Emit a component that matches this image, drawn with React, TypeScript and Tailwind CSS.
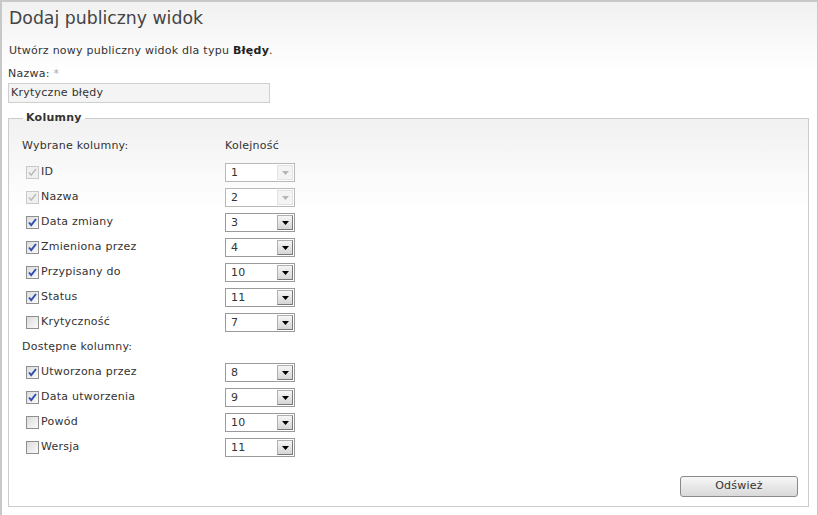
import React from 'react';

type Row = { label: string; value: string; checked: boolean; locked?: boolean };

const selected: Row[] = [
  { label: 'ID', value: '1', checked: true, locked: true },
  { label: 'Nazwa', value: '2', checked: true, locked: true },
  { label: 'Data zmiany', value: '3', checked: true },
  { label: 'Zmieniona przez', value: '4', checked: true },
  { label: 'Przypisany do', value: '10', checked: true },
  { label: 'Status', value: '11', checked: true },
  { label: 'Krytyczność', value: '7', checked: false },
];

const available: Row[] = [
  { label: 'Utworzona przez', value: '8', checked: true },
  { label: 'Data utworzenia', value: '9', checked: true },
  { label: 'Powód', value: '10', checked: false },
  { label: 'Wersja', value: '11', checked: false },
];

function Checkbox({ checked, locked }: { checked: boolean; locked?: boolean }) {
  return (
    <span
      className={
        'relative flex h-[13px] w-[13px] shrink-0 items-center justify-center border ' +
        (locked
          ? 'border-[#c9c9c9] bg-[#f0f0f0]'
          : 'border-[#8f8f8f] bg-gradient-to-br from-[#dcdcdc] to-[#fafafa]')
      }
    >
      {checked && (
        <svg width="9" height="9" viewBox="0 0 9 9">
          <path
            d="M1 4.5 L3.2 7.2 L8 1"
            fill="none"
            stroke={locked ? '#b8b8b8' : '#2f4fb0'}
            strokeWidth={locked ? 1.4 : 1.9}
          />
        </svg>
      )}
    </span>
  );
}

function OrderSelect({ value, locked }: { value: string; locked?: boolean }) {
  return (
    <div
      className={
        'flex h-[19px] w-[70px] items-center border bg-white ' +
        (locked ? 'border-[#b9b9b9]' : 'border-[#9a9a9a]')
      }
    >
      <span className="flex-1 pl-[5px] text-[11px] leading-none text-[#333]">{value}</span>
      <span
        className={
          'mr-[1px] flex h-[15px] w-[16px] items-center justify-center border ' +
          (locked
            ? 'border-[#e2e2e2] bg-[#f4f4f4]'
            : 'border-[#b0b0b0] border-r-[#7a7a7a] border-b-[#7a7a7a] bg-gradient-to-b from-[#f6f6f6] to-[#d6d6d6]')
        }
      >
        <svg width="7" height="4" viewBox="0 0 7 4">
          <path d="M0 0 H7 L3.5 4 Z" fill={locked ? '#b5b5b5' : '#000'} />
        </svg>
      </span>
    </div>
  );
}

function ColumnRow({ row }: { row: Row }) {
  return (
    <div className="flex h-[25px] items-center">
      <div className="flex w-[203px] items-center pl-[4px]">
        <Checkbox checked={row.checked} locked={row.locked} />
        <span className="ml-[2px] text-[#333]">{row.label}</span>
      </div>
      <OrderSelect value={row.value} locked={row.locked} />
    </div>
  );
}

export default function App() {
  return (
    <div
      className="h-[515px] w-[818px] overflow-hidden bg-white text-[11px] tracking-[0.25px] text-[#333]"
      style={{ fontFamily: '"DejaVu Sans", Verdana, sans-serif' }}
    >
      <div className="h-[560px] border-l-2 border-r border-t-2 border-[#c8c8c8] bg-gradient-to-b from-[#f1f1f1] to-white to-[70px] px-[6px] pt-[5px]">
        <h1 className="ml-[1px] text-[17.3px] leading-[22px] tracking-normal text-[#444]">Dodaj publiczny widok</h1>

        <p className="mt-[15px] ml-[1px] leading-[14px]">
          Utwórz nowy publiczny widok dla typu <b className="text-[#222]">Błędy</b>.
        </p>

        <div className="mt-[9px] leading-[14px]">
          Nazwa: <span className="text-[#aaa]">*</span>
        </div>
        <div className="mt-[2px] flex h-[20px] w-[262px] items-center border border-[#cfcfcf] bg-[#f4f4f4] px-[2px]">
          Krytyczne błędy
        </div>

        <fieldset className="mt-[8px] h-[396px] w-[801px] border border-[#cccccc] bg-gradient-to-b from-[#f1f1f1] to-white to-[90px] pl-[13px] pr-[10px]">
          <legend className="ml-[1px] px-[3px] font-bold leading-[14px] text-[#333]">Kolumny</legend>

          <div className="mt-[14px] flex leading-[14px]">
            <span className="w-[203px]">Wybrane kolumny:</span>
            <span>Kolejność</span>
          </div>
          <div className="mt-[7px]">
            {selected.map((r) => (
              <ColumnRow key={r.label} row={r} />
            ))}
          </div>
          <div className="flex h-[25px] items-center">Dostępne kolumny:</div>
          <div>
            {available.map((r) => (
              <ColumnRow key={r.label} row={r} />
            ))}
          </div>

          <div className="mt-[16px] flex justify-end">
            <button className="h-[21px] w-[118px] rounded-[3px] border border-[#8a8a8a] bg-gradient-to-b from-[#f7f7f7] to-[#d9d9d9] text-[11px] tracking-[0.25px] text-[#333]">
              Odśwież
            </button>
          </div>
        </fieldset>
      </div>
    </div>
  );
}
